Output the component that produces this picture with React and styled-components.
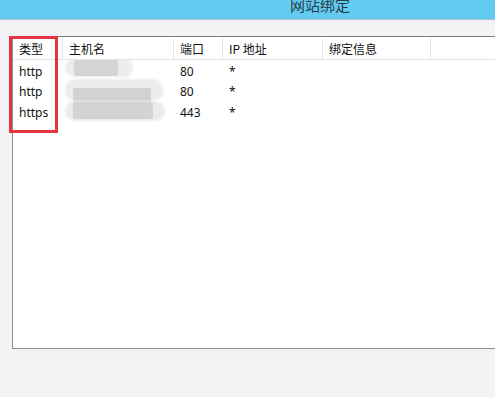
import React from "react";
import styled, { createGlobalStyle } from "styled-components";

const Global = createGlobalStyle`
  html, body { margin: 0; padding: 0; background: #f5f2f6; overflow: hidden; }
  body { font-family: "Noto Sans", "Noto Sans CJK SC", sans-serif; font-size: 12px; color: #111; }
`;

const Page = styled.div`
  width: 495px;
  height: 397px;
  display: flex;
  flex-direction: column;
  overflow: hidden;
`;

const TitleBar = styled.div`
  height: 19px;
  flex: none;
  background: #63cbef;
  border-bottom: 1px solid #a9c3d3;
  display: flex;
  align-items: flex-end;
  padding-left: 290px;
  overflow: hidden;
`;

const TitleText = styled.span`
  font-family: "Noto Sans CJK SC", sans-serif;
  font-size: 15px;
  line-height: 15px;
  color: #2b3b47;
  margin-bottom: 7px;
`;

const Body = styled.div`
  padding: 16px 0 0 12px;
`;

const ListView = styled.div`
  position: relative;
  width: 500px;
  height: 311px;
  background: #fff;
  border: 1px solid #8b8d93;
  border-right: none;
  border-top-color: #7a7c84;
`;

const cols = [50, 111, 49, 100, 108];

const HeaderRow = styled.div`
  display: flex;
  height: 21px;
  border-bottom: 1px solid #e3e3e3;
  margin-top: 1px;
`;

const HeaderCell = styled.div`
  width: ${(p) => p.$w}px;
  flex: none;
  box-sizing: border-box;
  border-right: 1px solid #e5e5e5;
  padding-left: 6px;
  display: flex;
  align-items: center;
  font-family: "Noto Sans CJK SC", sans-serif;
  font-size: 12px;
  color: #111;
`;

const Row = styled.div`
  display: flex;
  height: 20.5px;
`;

const Cell = styled.div`
  width: ${(p) => p.$w}px;
  flex: none;
  box-sizing: border-box;
  padding-left: 6px;
  display: flex;
  align-items: center;
  position: relative;
  font-size: 12px;
  color: #111;
`;

const Rows = styled.div`
  padding-top: 1px;
`;

const Smudge = styled.div`
  position: absolute;
  left: ${(p) => p.$x}px;
  top: ${(p) => p.$y}px;
  width: ${(p) => p.$w}px;
  height: ${(p) => p.$h}px;
  background: ${(p) => p.$c};
  border-radius: ${(p) => p.$r}px;
  filter: blur(${(p) => p.$b}px);
`;

const Highlight = styled.div`
  position: absolute;
  left: -4px;
  top: -1px;
  width: 43px;
  height: 91px;
  border: 3px solid #e2353f;
  pointer-events: none;
`;

const headers = ["类型", "主机名", "端口", "IP 地址", "绑定信息"];
const data = [
  ["http", "80", "*"],
  ["http", "80", "*"],
  ["https", "443", "*"],
];

export default function App() {
  return (
    <Page>
      <Global />
      <TitleBar>
        <TitleText>网站绑定</TitleText>
      </TitleBar>
      <Body>
        <ListView>
          <HeaderRow>
            {headers.map((h, i) => (
              <HeaderCell key={i} $w={cols[i]}>{h}</HeaderCell>
            ))}
          </HeaderRow>
          <Rows>
            {data.map((r, i) => (
              <Row key={i}>
                <Cell $w={cols[0]}>{r[0]}</Cell>
                <Cell $w={cols[1]}>
                  {i === 0 && (
                    <>
                      <Smudge $x={2} $y={-2} $w={68} $h={18} $c="#ececec" $r={9} $b={1} />
                      <Smudge $x={11} $y={-1} $w={44} $h={16} $c="#d4d4d4" $r={2} $b={0.5} />
                    </>
                  )}
                  {i === 1 && (
                    <>
                      <Smudge $x={2} $y={-3} $w={98} $h={22} $c="#ececec" $r={10} $b={1} />
                      <Smudge $x={10} $y={6} $w={78} $h={14} $c="#d2d2d2" $r={2} $b={0.5} />
                    </>
                  )}
                  {i === 2 && (
                    <>
                      <Smudge $x={2} $y={-1} $w={100} $h={20} $c="#ebebeb" $r={10} $b={1} />
                      <Smudge $x={10} $y={0} $w={80} $h={17} $c="#d3d3d3" $r={2} $b={0.5} />
                    </>
                  )}
                </Cell>
                <Cell $w={cols[2]}>{r[1]}</Cell>
                <Cell $w={cols[3]}>{r[2]}</Cell>
                <Cell $w={cols[4]} />
              </Row>
            ))}
          </Rows>
          <Highlight />
        </ListView>
      </Body>
    </Page>
  );
}
